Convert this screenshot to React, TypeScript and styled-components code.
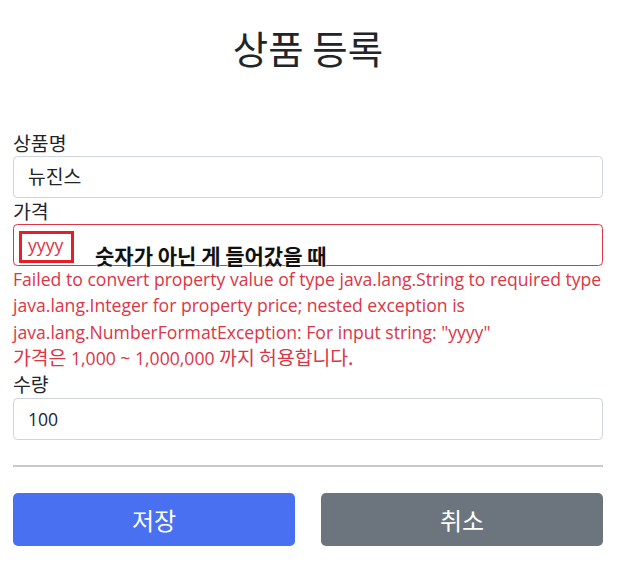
import React, { FC } from 'react'
import styled, { createGlobalStyle } from 'styled-components'

const GlobalStyle = createGlobalStyle`
	body {
		margin: 0;
		background: #fff;
		color: #212529;
		font-family: "Open Sans", "Noto Sans CJK KR", sans-serif;
		font-size: 17.6px;
		line-height: 1.5;
	}
	* {
		box-sizing: border-box;
	}
`

const App: FC = () => {
	return (
		<Page>
			<GlobalStyle />
			<Header>
				<Title>상품 등록</Title>
			</Header>

			<Form>
				<Field>
					<Label>상품명</Label>
					<Input>
						<Ko>뉴진스</Ko>
					</Input>
				</Field>

				<Field>
					<Label>가격</Label>
					<InputWrap>
						<Input $error>yyyy</Input>
						<Marker />
						<Note>숫자가 아닌 게 들어갔을 때</Note>
					</InputWrap>
					<ErrorText>
						Failed to convert property value of type java.lang.String to required type
						java.lang.Integer for property price; nested exception is
						java.lang.NumberFormatException: For input string: "yyyy"
					</ErrorText>
					<ErrorText $single>
						<Ko>가격은</Ko> 1,000 ~ 1,000,000 <Ko>까지 허용합니다.</Ko>
					</ErrorText>
				</Field>

				<Field>
					<Label>수량</Label>
					<Input>100</Input>
				</Field>

				<Divider />

				<Buttons>
					<Button $variant="primary">저장</Button>
					<Button $variant="secondary">취소</Button>
				</Buttons>
			</Form>
		</Page>
	)
}

export default App

const Page = styled.main`
	width: 626px;
	padding: 0 23px 0 13px;
`

const Header = styled.header`
	padding-top: 24px;
	margin-bottom: 59.5px;
	text-align: center;
`

const Title = styled.h2`
	margin: 0;
	font-size: 38.5px;
	font-weight: 400;
	line-height: 46px;
	font-family: "Noto Sans CJK KR", sans-serif;
`

const Form = styled.form`
	display: flex;
	flex-direction: column;
`

const Field = styled.div`
	display: flex;
	flex-direction: column;
`

const Ko = styled.span`
	font-family: "Noto Sans CJK KR", sans-serif;
	font-size: 1.1em;
	line-height: 1;
`

const Label = styled.label`
	display: block;
	height: 26.4px;
	font-family: "Noto Sans CJK KR", sans-serif;
	font-size: 19.4px;
	line-height: 26.4px;
`

const InputWrap = styled.div`
	position: relative;
`

const Input = styled.div<{ $error?: boolean }>`
	height: 41.8px;
	padding: 0 14px;
	display: flex;
	align-items: center;
	border: 1px solid ${({ $error }) => ($error ? '#dc3545' : '#ced4da')};
	border-radius: 4.4px;
	color: ${({ $error }) => ($error ? '#dc3545' : '#212529')};
	background: #fff;
`

const Marker = styled.div`
	position: absolute;
	left: 6px;
	top: 7px;
	width: 55px;
	height: 32px;
	border: 3px solid #e61e28;
`

const Note = styled.div`
	position: absolute;
	left: 82px;
	top: 21px;
	font-family: "Noto Sans CJK KR", sans-serif;
	font-size: 21px;
	font-weight: 700;
	line-height: 1;
	color: #111;
	white-space: nowrap;
	text-shadow: 0 0 2px #fff, 0 0 2px #fff, 0 0 1px #ddd;
`

const ErrorText = styled.div<{ $single?: boolean }>`
	height: ${({ $single }) => ($single ? '26.4px' : 'auto')};
	color: #dc3545;
	line-height: 26.4px;
	white-space: ${({ $single }) => ($single ? 'nowrap' : 'normal')};
`

const Divider = styled.hr`
	width: 100%;
	margin: 25px 0 26px;
	border: 0;
	border-top: 2px solid #c8c8c8;
`

const Buttons = styled.div`
	display: flex;
	gap: 26px;
`

const Button = styled.button<{ $variant: 'primary' | 'secondary' }>`
	flex: 1;
	height: 53px;
	border: 0;
	border-radius: 5px;
	font-family: "Noto Sans CJK KR", sans-serif;
	font-size: 24px;
	color: #fff;
	background: ${({ $variant }) => ($variant === 'primary' ? '#4a70f2' : '#6c757d')};
`
